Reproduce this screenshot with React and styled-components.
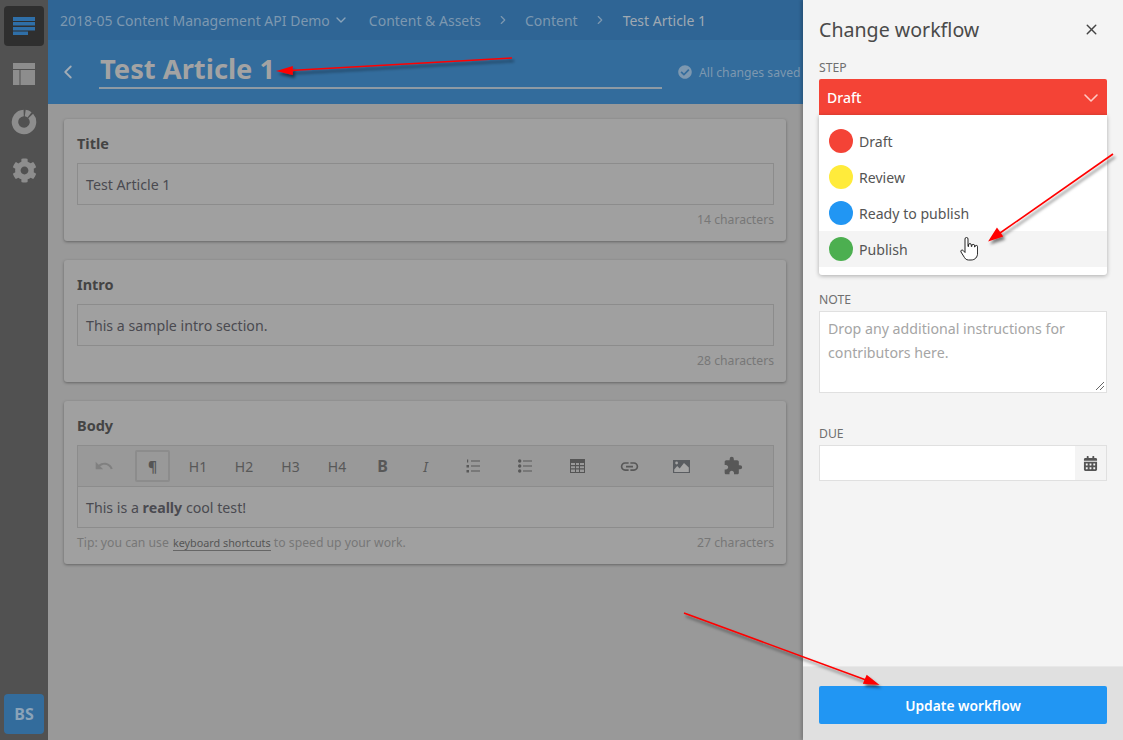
import React from 'react'
import styled, { createGlobalStyle } from 'styled-components'
import { FaCog, FaCalendarAlt, FaCheckCircle } from 'react-icons/fa'
import { MdUndo, MdLink, MdExtension } from 'react-icons/md'
import { ChevronDown, ChevronLeft, ChevronRight, X } from 'lucide-react'

const GlobalStyle = createGlobalStyle`
  html, body { margin: 0; padding: 0; height: 100%; }
  body { font-family: "Noto Sans", "Liberation Sans", sans-serif; color: #4a4a4a; }
  * { box-sizing: border-box; }
`

const Page = styled.div`
  position: relative;
  display: flex;
  width: 100%;
  height: 100vh;
  overflow: hidden;
`

const Sidebar = styled.nav`
  display: flex;
  flex: 0 0 48px;
  flex-direction: column;
  align-items: center;
  padding: 6px 0;
  background: #515151;
`

const NavItem = styled.div`
  display: flex;
  align-items: center;
  justify-content: center;
  width: 40px;
  height: 40px;
  margin-bottom: 8px;
  border-radius: 4px;
  background: ${p => (p.$active ? '#2f2f2f' : 'transparent')};
  color: #8d8d8d;
`

const Avatar = styled.div`
  display: flex;
  align-items: center;
  justify-content: center;
  width: 40px;
  height: 40px;
  margin-top: auto;
  border-radius: 4px;
  background: #336c9c;
  color: #8ba3b8;
  font-size: 16px;
  font-weight: 700;
`

const Workspace = styled.div`
  display: flex;
  flex: 1;
  flex-direction: column;
  min-width: 0;
  overflow: hidden;
  background: #999;
`

const TopBar = styled.div`
  display: flex;
  flex: 0 0 40px;
  align-items: center;
  padding-left: 12px;
  background: #2f6595;
  color: #8aa3b9;
  font-size: 14px;
  white-space: nowrap;
`

const Crumb = styled.span`
  color: ${p => (p.$current ? '#9fa9b2' : '#7d98b0')};
`

const ProjectChevron = styled(ChevronDown)`
  margin: 0 20px 0 3px;
`

const Separator = styled.span`
  display: flex;
  flex: 0 0 ${p => p.$w}px;
  justify-content: center;
  color: #7d98b0;
`

const SubBar = styled.div`
  display: flex;
  flex: 0 0 64px;
  align-items: center;
  padding-left: 9px;
  background: #336c9c;
  white-space: nowrap;
`

const BackLink = styled.span`
  display: flex;
  flex: 0 0 42px;
  color: #a2acb5;
  margin-top: -1px;
`

const TitleField = styled.div`
  flex: 0 0 563px;
  align-self: flex-start;
  height: 45px;
  margin-top: 4px;
  padding-left: 1px;
  border-bottom: 2px solid #8e9aa4;
  color: #a3a3a3;
  font-size: 27.3px;
  font-weight: 700;
  line-height: 50px;
`

const SaveState = styled.div`
  display: flex;
  flex: none;
  align-items: center;
  gap: 7px;
  margin-left: 16px;
  color: #7d98b0;
  font-size: 12.2px;
`

const Content = styled.main`
  display: flex;
  flex-direction: column;
  gap: 19px;
  padding: 15px 17px 0 16px;
`

const Card = styled.section`
  padding: 14px 12px 0 13px;
  height: ${p => p.$height}px;
  border-radius: 3px;
  background: #a0a0a0;
  box-shadow: 0 1px 3px rgba(0, 0, 0, 0.35);
`

const FieldLabel = styled.div`
  height: 30px;
  color: #444;
  font-size: 14.5px;
  font-weight: 700;
  line-height: 20px;
`

const InputBox = styled.div`
  height: 42px;
  padding-left: 8px;
  border: 1px solid #8c8c8c;
  color: #4a4a50;
  font-size: 14.2px;
  line-height: 42px;
`

const FieldMeta = styled.div`
  display: flex;
  justify-content: space-between;
  height: 28px;
  color: #777;
  font-size: 12.2px;
  line-height: 29px;
`

const Shortcut = styled.span`
  margin-left: 1px;
  border-bottom: 1px solid #666;
  color: #555;
  font-size: 10.8px;
`

const Toolbar = styled.div`
  display: flex;
  align-items: center;
  height: 42px;
  border: 1px solid #8c8c8c;
  background: #999;
`

const ToolButton = styled.div`
  display: flex;
  flex: 0 0 ${p => p.$w}px;
  align-items: center;
  justify-content: center;
  color: ${p => (p.$muted ? '#808080' : '#585858')};
  font-size: ${p => (p.$strong ? 16 : 14)}px;
  font-weight: ${p => (p.$strong ? 700 : 400)};
  font-style: ${p => (p.$italic ? 'italic' : 'normal')};
`

const ActiveTool = styled.div`
  display: flex;
  align-items: center;
  justify-content: center;
  width: 35px;
  height: 32px;
  border: 2px solid #8c8c8c;
  border-radius: 2px;
  color: #555;
  font-size: 14px;
  font-weight: 700;
`

const Editor = styled(InputBox)`
  border-top: 0;
  height: 41px;
`

const Panel = styled.aside`
  display: flex;
  flex: 0 0 320px;
  flex-direction: column;
  background: #f4f4f4;
  box-shadow: -2px 0 3px rgba(0, 0, 0, 0.2);
  z-index: 1;
`

const PanelBody = styled.div`
  position: relative;
  flex: 1;
  padding: 0 16px;
`

const PanelHeader = styled.div`
  display: flex;
  align-items: center;
  justify-content: space-between;
  height: 60px;
  padding-bottom: 2px;
  color: #4a4a4a;
  font-size: 19.6px;
`

const CloseButton = styled.span`
  display: flex;
  color: #444;
  margin-right: 7px;
`

const SmallLabel = styled.div`
  height: 19px;
  color: #6f6f6f;
  font-size: 12.2px;
  line-height: 16px;
`

const SelectBar = styled.div`
  display: flex;
  align-items: center;
  justify-content: space-between;
  height: 36px;
  padding: 1px 4px 0 8px;
  border-radius: 2px 2px 0 0;
  background: #f44336;
  color: #fff;
  font-size: 14px;
  font-weight: 500;
`

const Dropdown = styled.ul`
  position: absolute;
  top: 115px;
  left: 16px;
  right: 16px;
  margin: 0;
  padding: 8px 0;
  border-radius: 0 0 3px 3px;
  background: #fff;
  box-shadow: 0 1px 4px rgba(0, 0, 0, 0.3);
  list-style: none;
`

const Option = styled.li`
  display: flex;
  align-items: center;
  gap: 6px;
  height: 36px;
  padding-left: 10px;
  background: ${p => (p.$hover ? '#f4f4f4' : 'transparent')};
  color: #555;
  font-size: 14.1px;
`

const Dot = styled.span`
  width: 24px;
  height: 24px;
  border-radius: 50%;
  background: ${p => p.$color};
`

const NoteSection = styled.div`
  margin-top: 177px;
`

const NoteBox = styled.div`
  position: relative;
  height: 82px;
  padding: 5px 8px;
  border: 1px solid #e0e0e0;
  background: #fff;
  color: #a5a5a5;
  font-size: 14.2px;
  line-height: 24px;
`

const ResizeGrip = styled.svg`
  position: absolute;
  right: 1px;
  bottom: 1px;
`

const DueSection = styled.div`
  margin-top: 33px;
`

const DateField = styled.div`
  display: flex;
  justify-content: flex-end;
  height: 36px;
  border: 1px solid #e0e0e0;
  background: #fff;
`

const CalendarButton = styled.div`
  display: flex;
  align-items: center;
  justify-content: center;
  width: 31px;
  background: #f4f4f4;
  color: #555;
`

const PanelFooter = styled.div`
  flex: 0 0 74px;
  padding: 19px 16px 0;
  border-top: 1px solid #e8e8e8;
  background: #e0e0e0;
`

const PrimaryButton = styled.button`
  display: block;
  width: 100%;
  height: 38px;
  border: 0;
  border-radius: 2px;
  background: #2196f3;
  color: #fff;
  font: 600 13.8px "Noto Sans", "Liberation Sans", sans-serif;
`

const Annotations = styled.svg`
  position: absolute;
  inset: 0;
  z-index: 2;
  pointer-events: none;
`

const HandCursor = styled.svg`
  position: absolute;
  left: 960px;
  top: 237px;
  z-index: 3;
`

const EntriesIcon = () => (
  <svg width="22" height="18" viewBox="0 0 22 18">
    <path fill="#2f6fa8" d="M0 0h22v4H0zM0 5h22v3.500H0zM0 10h22v3.500H0zM0 14.500h15V18H0z" />
  </svg>
)

const LayoutIcon = () => (
  <svg width="22" height="22" viewBox="0 0 22 22">
    <path fill="#8d8d8d" d="M0 0h22v6H0zM0 7h6.500v15H0zM7.500 7H22v15H7.500z" />
  </svg>
)

const DonutIcon = () => (
  <svg width="26" height="26" viewBox="0 0 26 26" fill="none" stroke="#8d8d8d" strokeWidth="6.500">
    <path d="M14.250 4.090A9 9 0 0 1 18.540 5.910" />
    <path d="M19.690 6.980A9 9 0 1 1 12.690 4.010" />
  </svg>
)

const NumberedListIcon = () => (
  <svg width="14" height="14" viewBox="0 0 14 14" fill="#585858">
    <path d="M5 1.400h9v1.200H5zM5 6.400h9v1.200H5zM5 11.400h9v1.200H5z" />
    <path d="M1 .5h1.200v3H1zM.5 6h2.500v2.500H.5zM.5 11h2.500v2.500H.5z" />
  </svg>
)

const BulletListIcon = () => (
  <svg width="14" height="14" viewBox="0 0 14 14" fill="#585858">
    <path d="M5 1.400h9v1.200H5zM5 6.400h9v1.200H5zM5 11.400h9v1.200H5z" />
    <circle cx="1.700" cy="2" r="1.700" />
    <circle cx="1.700" cy="7" r="1.700" />
    <circle cx="1.700" cy="12" r="1.700" />
  </svg>
)

const TableIcon = () => (
  <svg width="15" height="14" viewBox="0 0 15 14">
    <path fill="#555" d="M0 0h15v14H0z" />
    <path fill="#9a9a9a" d="M1 4h4v2H1zM6 4h3v2H6zM10 4h4v2h-4zM1 7.200h4v2H1zM6 7.200h3v2H6zM10 7.200h4v2h-4zM1 10.400h4V13H1zM6 10.400h3V13H6zM10 10.400h4V13h-4z" />
  </svg>
)

const ImageIcon = () => (
  <svg width="17" height="13" viewBox="0 0 17 13">
    <path fill="#5a5d61" d="M0 0h17v13H0z" />
    <path fill="#a5a5a5" d="M1.200 12v-2.500l3-3.500 2.500 2.500 4.300-5.500 4.800 4.500V12z" />
    <circle cx="3.600" cy="3" r="1.400" fill="#a5a5a5" />
  </svg>
)

const ParagraphTool = () => (
  <ToolButton $w={45}>
    <ActiveTool>¶</ActiveTool>
  </ToolButton>
)

const ArticleCard = ({ label, value, count, height }) => (
  <Card $height={height}>
    <FieldLabel>{label}</FieldLabel>
    <InputBox>{value}</InputBox>
    <FieldMeta>
      <span />
      <span>{count}</span>
    </FieldMeta>
  </Card>
)

const steps = [
  { name: 'Draft', color: '#f44336' },
  { name: 'Review', color: '#ffeb3b' },
  { name: 'Ready to publish', color: '#2196f3' },
  { name: 'Publish', color: '#4caf50', hover: true },
]

export default function App() {
  return (
    <Page>
      <GlobalStyle />
      <Sidebar>
        <NavItem $active><EntriesIcon /></NavItem>
        <NavItem><LayoutIcon /></NavItem>
        <NavItem><DonutIcon /></NavItem>
        <NavItem><FaCog size={25} /></NavItem>
        <Avatar>BS</Avatar>
      </Sidebar>

      <Workspace>
        <TopBar>
          <Crumb>2018-05 Content Management API Demo</Crumb>
          <ProjectChevron size={16} />
          <Crumb>Content &amp; Assets</Crumb>
          <Separator $w={44}><ChevronRight size={14} /></Separator>
          <Crumb>Content</Crumb>
          <Separator $w={45}><ChevronRight size={14} /></Separator>
          <Crumb $current>Test Article 1</Crumb>
        </TopBar>
        <SubBar>
          <BackLink><ChevronLeft size={22} /></BackLink>
          <TitleField>Test Article 1</TitleField>
          <SaveState><FaCheckCircle size={14} />All changes saved</SaveState>
        </SubBar>
        <Content>
          <ArticleCard label="Title" value="Test Article 1" count="14 characters" height={122} />
          <ArticleCard label="Intro" value="This a sample intro section." count="28 characters" height={122} />
          <Card $height={163}>
            <FieldLabel>Body</FieldLabel>
            <Toolbar>
              <ToolButton $w={52} $muted><MdUndo size={20} /></ToolButton>
              <ParagraphTool />
              <ToolButton $w={46}>H1</ToolButton>
              <ToolButton $w={46}>H2</ToolButton>
              <ToolButton $w={47}>H3</ToolButton>
              <ToolButton $w={46}>H4</ToolButton>
              <ToolButton $w={45} $strong>B</ToolButton>
              <ToolButton $w={41} $italic>I</ToolButton>
              <ToolButton $w={53}><NumberedListIcon /></ToolButton>
              <ToolButton $w={52}><BulletListIcon /></ToolButton>
              <ToolButton $w={52}><TableIcon /></ToolButton>
              <ToolButton $w={52}><MdLink size={21} /></ToolButton>
              <ToolButton $w={52}><ImageIcon /></ToolButton>
              <ToolButton $w={52}><MdExtension size={20} /></ToolButton>
            </Toolbar>
            <Editor>This is a <b>really</b> cool test!</Editor>
            <FieldMeta>
              <span>Tip: you can use <Shortcut>keyboard shortcuts</Shortcut> to speed up your work.</span>
              <span>27 characters</span>
            </FieldMeta>
          </Card>
        </Content>
      </Workspace>

      <Panel>
        <PanelBody>
          <PanelHeader>
            Change workflow
            <CloseButton><X size={17} /></CloseButton>
          </PanelHeader>
          <SmallLabel>STEP</SmallLabel>
          <SelectBar>
            Draft
            <ChevronDown size={24} strokeWidth={1.6} color="#ffc9c4" />
          </SelectBar>
          <Dropdown>
            {steps.map(s => (
              <Option key={s.name} $hover={s.hover}>
                <Dot $color={s.color} />
                {s.name}
              </Option>
            ))}
          </Dropdown>
          <NoteSection>
            <SmallLabel>NOTE</SmallLabel>
            <NoteBox>
              Drop any additional instructions for contributors here.
              <ResizeGrip width="10" height="10" viewBox="0 0 10 10">
                <path stroke="#666" d="M1 9l8-8M5 9l4-4" />
              </ResizeGrip>
            </NoteBox>
          </NoteSection>
          <DueSection>
            <SmallLabel>DUE</SmallLabel>
            <DateField>
              <CalendarButton><FaCalendarAlt size={15} /></CalendarButton>
            </DateField>
          </DueSection>
        </PanelBody>
        <PanelFooter>
          <PrimaryButton>Update workflow</PrimaryButton>
        </PanelFooter>
      </Panel>

      <Annotations width="1123" height="740" viewBox="0 0 1123 740">
        <defs>
          <filter id="arrowShadow" x="-10%" y="-10%" width="120%" height="130%">
            <feDropShadow dx="2" dy="3" stdDeviation="1.500" floodColor="#000" floodOpacity="0.5" />
          </filter>
        </defs>
        <g filter="url(#arrowShadow)" fill="#f00" stroke="#f00" strokeWidth="1.600">
          <path d="M512 58L290 70.500" />
          <path d="M279 71l13-4 0 7z" />
          <path d="M1113 154L1000 233" />
          <path d="M990 240l7-11 5 7z" />
          <path d="M684 613L866 680" />
          <path d="M877 684l-13-1 3-7z" />
        </g>
      </Annotations>
      <HandCursor width="18" height="25" viewBox="0 0 18 25">
        <path
          fill="#fff"
          stroke="#222"
          strokeWidth="1"
          d="M5 2a1.500 1.500 0 0 1 3 0v7.500h.5V8a1.400 1.400 0 0 1 2.800 0v1.500h.5V8.800a1.400 1.400 0 0 1 2.800 0v1.200h.4v-.3a1.300 1.300 0 0 1 2.600 0V16c0 4-2.500 7-6.500 7H8.500c-2.500 0-3.500-1.500-5-4L1 15c-.8-1.500 1-2.700 2.200-1.500L5 15.500z"
        />
      </HandCursor>
    </Page>
  )
}
